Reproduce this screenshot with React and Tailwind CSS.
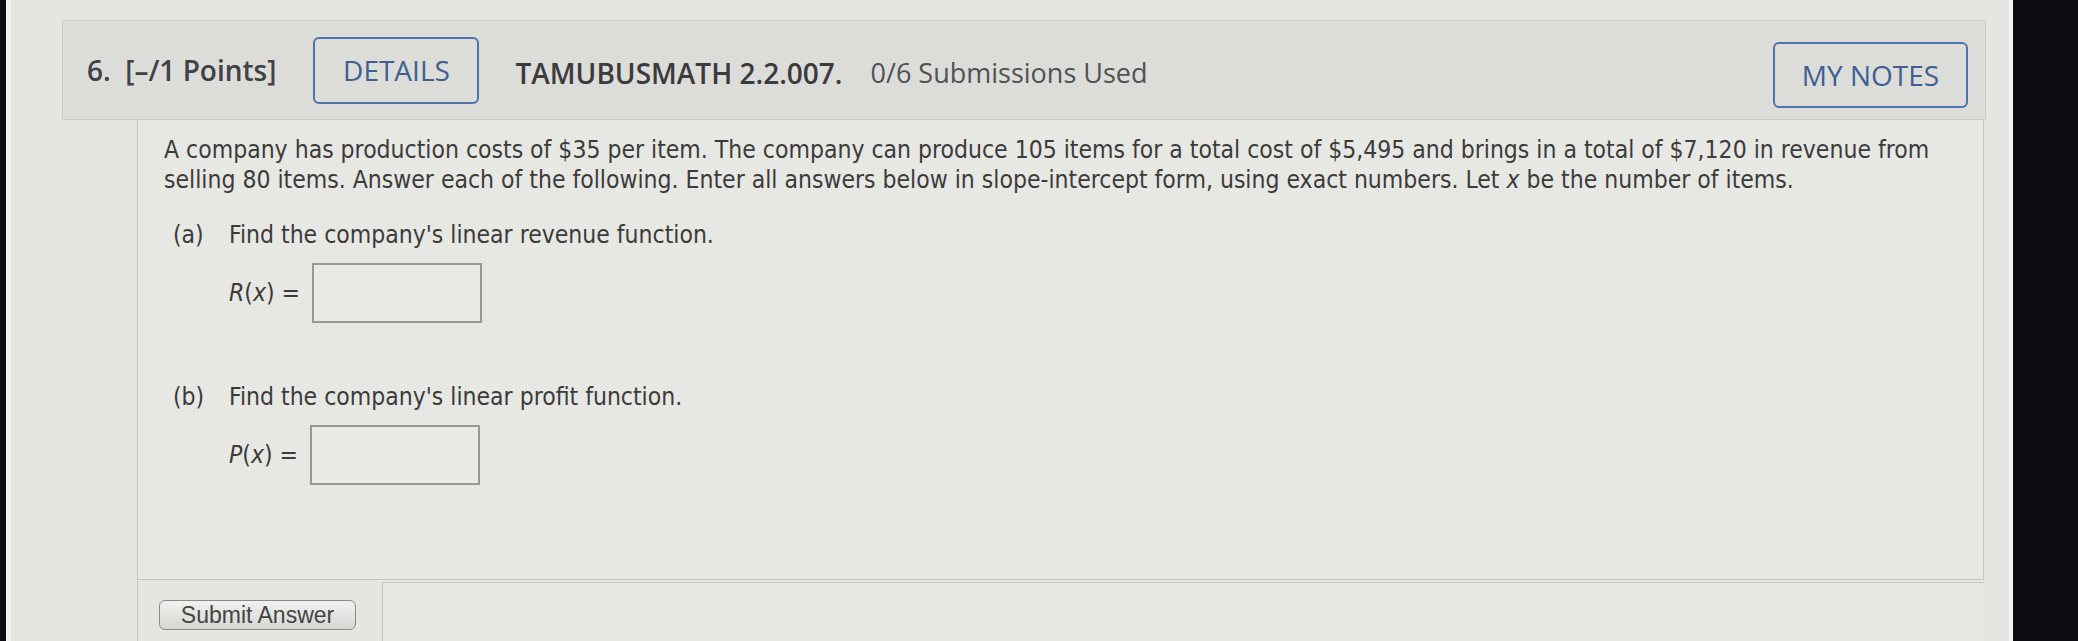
import React from "react";

const bodyFont = "font-['DejaVu_Sans_Condensed','DejaVu_Sans',sans-serif] font-stretch-condensed";

function AnswerRow({ fn }) {
  return (
    <div className="flex items-center ml-[91px] mt-[13px]">
      <span className="text-[24.5px] leading-[30px] text-[#3b3b3b] whitespace-nowrap">
        <i>{fn}</i>(<i>x</i>) =
      </span>
      <div className="ml-[12px] w-[170px] h-[60px] border-2 border-[#979795] bg-[#e9e9e6]" />
    </div>
  );
}

function Part({ label, text }) {
  return (
    <div className="flex ml-[35px] text-[24.5px] leading-[30px] text-[#3b3b3b]">
      <span className="w-[56px]">{label}</span>
      <span>{text}</span>
    </div>
  );
}

export default function App() {
  return (
    <div className="w-[2078px] h-[641px] bg-black flex overflow-hidden">
      {/* screen edge */}
      <div className="w-[6px] bg-[#0b0d10]" />
      <div className="w-[5px] bg-[#f2f2f0]" />

      <div className="flex-1 bg-[#e5e5e2] flex flex-col pl-[51px] pr-[23px] pt-[20px]">
        {/* Header */}
        <div className="h-[100px] flex items-center border border-[#cbcbc7] bg-[#dcdcd8] pl-[24px] pr-[17px] font-['Open_Sans',sans-serif]">
          <span className="font-semibold text-[28px] text-[#414148] whitespace-nowrap">6.&nbsp; [–/1 Points]</span>
          <button className="ml-[37px] w-[166px] h-[67px] border-2 border-[#4d73ad] rounded-md text-[#3f5f92] text-[28px]">
            DETAILS
          </button>
          <span className="ml-[36px] mt-[6px] font-semibold text-[28px] text-[#3a3a3f] whitespace-nowrap">TAMUBUSMATH 2.2.007.</span>
          <span className="ml-[28px] mt-[6px] text-[27px] text-[#505055] whitespace-nowrap">0/6 Submissions Used</span>
          <div className="flex-1" />
          <button className="mt-[10px] w-[195px] h-[66px] border-2 border-[#4d73ad] rounded-md text-[#3f5f92] text-[28px]">
            MY NOTES
          </button>
        </div>

        {/* Question body */}
        <div className={`ml-[75px] flex-1 flex flex-col border-l border-[#c4c4c0] ${bodyFont}`}>
          <div className="border-r border-b border-[#c4c4c0] bg-[#e7e7e3] pt-[15px] pb-[94px] mr-[2px]">
            <div className="pl-[26px] text-[24.5px] leading-[30px] text-[#3b3b3b] whitespace-nowrap">
              <div>A company has production costs of $35 per item. The company can produce 105 items for a total cost of $5,495 and brings in a total of $7,120 in revenue from</div>
              <div>selling 80 items. Answer each of the following. Enter all answers below in slope-intercept form, using exact numbers. Let <i>x</i> be the number of items.</div>
            </div>

            <div className="mt-[25px]">
              <Part label="(a)" text="Find the company's linear revenue function." />
              <AnswerRow fn="R" />
            </div>

            <div className="mt-[59px]">
              <Part label="(b)" text="Find the company's linear profit function." />
              <AnswerRow fn="P" />
            </div>
          </div>

          {/* Submit row */}
          <div className="flex-1 flex">
            <div className="w-[244px] pl-[21px] pt-[20px]">
              <button className="w-[197px] h-[30px] rounded-md border border-[#8a8a88] bg-gradient-to-b from-[#f1f1ef] to-[#d6d6d3] font-['Liberation_Sans',Arial,sans-serif] text-[23px] leading-none text-[#454545]">
                Submit Answer
              </button>
            </div>
            <div className="flex-1 border-l border-t border-[#c4c4c0] bg-[#e7e7e3] mt-[2px] mr-[2px]" />
          </div>
        </div>
      </div>

      <div className="w-[4px] bg-[#f4f4f2]" />
      <div className="w-[65px] bg-[#0a0c0f]" />
    </div>
  );
}
